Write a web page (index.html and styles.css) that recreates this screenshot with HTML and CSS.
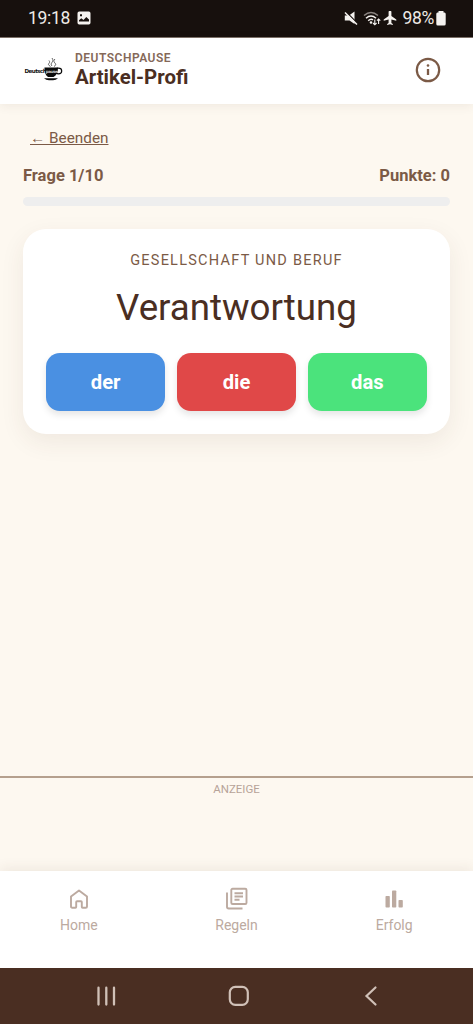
FILE: index.html
```html
<!DOCTYPE html>
<html lang="de">
<head>
<meta charset="utf-8">
<title>Artikel-Profi</title>
<link rel="stylesheet" href="styles.css">
</head>
<body>
<div class="screen">
  <div class="status">
    <div class="status-left">
      <span>19:18</span>
      <svg width="14" height="14" viewBox="0 0 14 14"><path fill="#f5f2ef" fill-rule="evenodd" d="M2.200.5h9.600a1.700 1.700 0 0 1 1.700 1.700v9.600a1.700 1.700 0 0 1-1.700 1.700H2.200a1.700 1.700 0 0 1-1.700-1.700V2.200A1.700 1.700 0 0 1 2.200.5zM2 10.500h10V8.500L9.300 6 6.500 9 4.300 7.300 2 9.300zM3 3.200v2h2v-2z"/></svg>
    </div>
    <div class="status-right">
      <svg width="14" height="14" viewBox="0 0 14 14"><path fill="#f5f2ef" d="M.8 4.500H5L10.500.5V13L5.500 9.500H.8z"/><path d="M2 .8l12 12" stroke="#17100d" stroke-width="1.300"/><path d="M1 1.500l12 12" stroke="#f5f2ef" stroke-width="1.500"/></svg>
      <svg class="wifi" width="18" height="15" viewBox="0 0 18 15" fill="none"><path d="M1 4.500Q8 -1.500 15 4.500" stroke="#8b8480" stroke-width="1.500"/><path d="M3 7.300Q8 2.800 13 7.300M5.200 9.700Q8 7.300 10 8.900" stroke="#f5f2ef" stroke-width="1.500"/><circle cx="8" cy="11.500" r="1.300" fill="#f5f2ef"/><path d="M11.800 8.500v5M10 12l1.800 1.800 1.800-1.800M15.600 13V8M14 9.600 15.600 8l1.700 1.600" stroke="#f5f2ef" stroke-width="1.100"/></svg>
      <svg width="14" height="14" viewBox="2 2 20 20"><path fill="#f5f2ef" d="M21 16v-2l-7-5V3.500a2 2 0 0 0-4 0V9l-7 5v2l7-2v5l-2 1.500V22l4-1 4 1v-1.500L14 19v-5z"/></svg>
      <span class="battery-text">98%</span>
      <svg class="battery" width="10" height="15" viewBox="0 0 10 15"><path fill="#f5f2ef" d="M2.500 0h5v1.500h1Q9.700 1.700 9.700 3v10Q9.700 14.500 8.200 14.500H1.800Q.3 14.500.3 13V3Q.3 1.700 1.500 1.500h1z"/></svg>
    </div>
  </div>
  <header class="header">
    <svg class="logo" width="40" height="26" viewBox="0 0 40 26">
      <path d="M26.500 9.500c-5-3 1-3-1.500-6M30 9.500c5-3-3-4 1-7.500M28 9c-3-3 3-4 0-8" fill="none" stroke="#333" stroke-width=".75"/>
      <path d="M20.500 10.500H34c0 5-1.500 8-4.500 9.500h-5.500c-2.500-1.500-3.500-5-3.500-9.500z" fill="#0b0b0b"/>
      <ellipse cx="34.500" cy="14" rx="3.200" ry="2.800" fill="none" stroke="#0b0b0b" stroke-width="1.200"/>
      <path d="M20 21.300h14q-2 2-5 2h-4q-3 0-5-2z" fill="#0b0b0b"/>
      <text x="0.500" y="16" class="logo-text">Deutsch</text><text x="21.800" y="15.500" class="logo-word">pause</text>
    </svg>
    <div class="titles">
      <div class="brand">DEUTSCHPAUSE</div>
      <h1 class="title">Artikel-Profi</h1>
    </div>
    <svg class="info" width="26" height="26" viewBox="0 0 26 26"><circle cx="13" cy="13" r="11.200" fill="none" stroke="#7b5a46" stroke-width="2.200"/><path d="M13 12v6" stroke="#7b5a46" stroke-width="2.300"/><circle cx="13" cy="8.500" r="1.300" fill="#7b5a46"/></svg>
  </header>
  <main class="main">
    <a class="back">← Beenden</a>
    <div class="stats"><span>Frage 1/10</span><span>Punkte: 0</span></div>
    <div class="progress"></div>
    <section class="card">
      <div class="category">GESELLSCHAFT UND BERUF</div>
      <div class="word">Verantwortung</div>
      <div class="answers">
        <button class="answer der">der</button>
        <button class="answer die">die</button>
        <button class="answer das">das</button>
      </div>
    </section>
  </main>
  <div class="ad">ANZEIGE</div>
  <nav class="nav">
    <div class="tab">
      <svg width="24" height="24" viewBox="0 0 24 24"><path d="M4 9.500 12 3.400l8 6.100v9.900q0 1.300-1.300 1.300h-3.100q-.8 0-.8-.8v-4.900q0-.8-.8-.8h-4q-.8 0-.8.8v4.900q0 .8-.8.8H5.300q-1.300 0-1.300-1.300z" fill="none" stroke="#bcaaa0" stroke-width="1.900" stroke-linejoin="round"/></svg>
      <span>Home</span>
    </div>
    <div class="tab">
      <svg width="24" height="24" viewBox="0 0 24 24" fill="none" stroke="#bcaaa0" stroke-width="1.900"><rect x="6.300" y="1.800" width="15.200" height="15.200" rx="1.300"/><path d="M2 5.500v14.300q0 1.700 1.700 1.700H17.500M9.500 6.300h8.500M9.500 9.500h8.500M9.500 12.800h5"/></svg>
      <span>Regeln</span>
    </div>
    <div class="tab">
      <svg width="24" height="24" viewBox="0 0 24 24" fill="#bcaaa0"><rect x="3.500" y="9" width="4.300" height="11.500" rx=".8"/><rect x="10" y="3.500" width="4.300" height="17" rx=".8"/><rect x="16.500" y="13" width="4.300" height="7.500" rx=".8"/></svg>
      <span>Erfolg</span>
    </div>
  </nav>
  <div class="system">
    <svg width="20" height="22" viewBox="0 0 20 22"><path d="M2.500 2.700v16.800M10.300 2.700v16.800M18 2.700v16.800" stroke="#d0c0b7" stroke-width="2.300" stroke-linecap="round"/></svg>
    <svg width="22" height="22" viewBox="0 0 22 22"><rect x="1.800" y="1.800" width="18" height="18" rx="5.500" fill="none" stroke="#d0c0b7" stroke-width="2.200"/></svg>
    <svg width="20" height="22" viewBox="0 0 20 22"><path d="M13.500 2.500 4.500 11l9 8.500" fill="none" stroke="#d0c0b7" stroke-width="2.200" stroke-linecap="round"/></svg>
  </div>
</div>
</body>
</html>
```

FILE: styles.css
```css
* { box-sizing: border-box; }
body { margin: 0; font-family: Roboto, "Liberation Sans", sans-serif; color: #7b5a46; }
svg { display: block; flex: none; }
.screen { width: 473px; height: 1024px; display: flex; flex-direction: column; overflow: hidden; background: #fdf8f0; }
.status { height: 38px; flex: none; background: #17100d; border-bottom: 1px solid #7d716a; color: #eeeae6; display: flex; justify-content: space-between; padding: 0 27px 1px 28px; font-size: 17.500px; }
.status-left, .status-right { display: flex; align-items: center; }
.status-left { gap: 7px; letter-spacing: -.3px; }
.wifi { margin-left: 5px; margin-right: 2px; }
.battery-text { margin-left: 5px; margin-right: 2px; letter-spacing: -.3px; }
.header { height: 66px; flex: none; background: #fff; display: flex; align-items: center; padding: 0 32px 2px 24px; box-shadow: 0 2px 10px rgba(74,46,34,.08); z-index: 1; }
.logo-text { font: bold 5.500px "DejaVu Sans", sans-serif; fill: #111; letter-spacing: -.5px; }
.logo-word { font: bold 4.200px "DejaVu Sans", sans-serif; fill: #ccc; letter-spacing: -.5px; }
.titles { margin-left: 11px; flex: 1; }
.brand { font-size: 12px; line-height: 14px; font-weight: 600; letter-spacing: .5px; color: #856858; }
.title { margin: 0; font-size: 20.400px; line-height: 24px; font-weight: 700; color: #4a2e22; }
.main { flex: 1; padding: 24px 23px 0; }
.back { display: block; width: max-content; margin-left: 7px; font-size: 15.300px; line-height: 21px; text-decoration: underline; }
.stats { display: flex; justify-content: space-between; margin-top: 17px; font-size: 16.500px; line-height: 20px; font-weight: 700; }
.progress { height: 9px; margin-top: 11px; border-radius: 5px; background: #eee; }
.card { margin-top: 23px; height: 205px; padding: 23px; border-radius: 23px; background: #fff; text-align: center; box-shadow: 0 8px 24px rgba(74,46,34,.08); }
.category { font-size: 14.500px; line-height: 18px; letter-spacing: 1.250px; }
.word { margin-top: 16px; font-size: 36.700px; line-height: 44px; color: #4a2e22; }
.answers { display: grid; grid-template-columns: repeat(3, 1fr); gap: 11.500px; margin-top: 23px; }
.answer { height: 58px; padding: 0; border: 0; border-radius: 14px; color: #fff; font: 700 20.200px Roboto, sans-serif; box-shadow: 0 4px 7px rgba(0,0,0,.1); }
.der { background: #4a90e2; }
.die { background: #e04848; }
.das { background: #4be37c; }
.ad { height: 95px; flex: none; border-top: 2px solid #b5a08e; padding-top: 4px; text-align: center; font-size: 11.500px; line-height: 15px; color: #b7a398; }
.nav { height: 97px; flex: none; background: #fff; display: flex; padding-top: 16px; box-shadow: 0 -3px 12px rgba(74,46,34,.08); }
.tab { flex: 1; display: flex; flex-direction: column; align-items: center; gap: 5px; font-size: 14px; line-height: 18px; color: #bcaaa0; }
.system { height: 56px; flex: none; background: #4a2e22; display: flex; align-items: center; justify-content: space-between; padding: 0 91px 0 96px; }
```
